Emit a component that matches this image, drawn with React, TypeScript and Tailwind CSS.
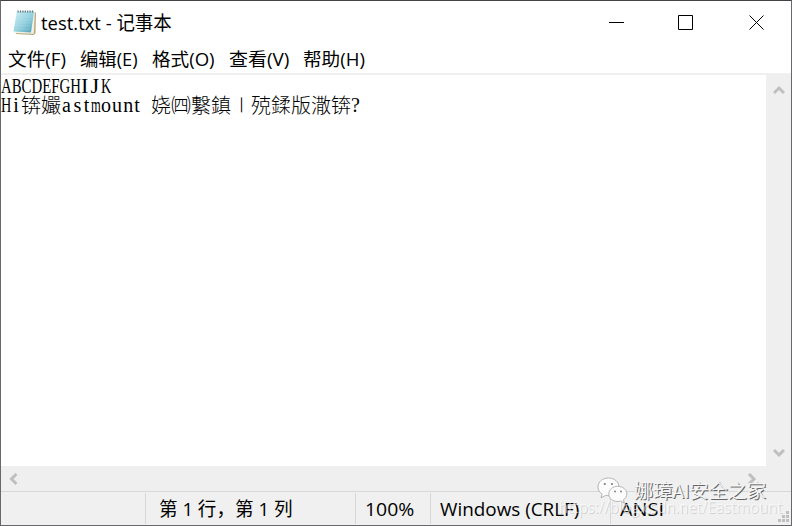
import { useLayoutEffect, useRef, useState } from "react";

const UI = "font-['Open_Sans','Noto_Sans_CJK_SC',sans-serif]";
const CJK = "font-['Noto_Sans_CJK_SC',sans-serif] font-light";
const SERIF = "font-['Liberation_Serif','Noto_Sans_CJK_SC',serif]";

/** One line of text stretched or squeezed to a given width. */
function Fit({ text, width, className = "" }: { text: string; width: number; className?: string }) {
  const ref = useRef<HTMLSpanElement>(null);
  const [scale, setScale] = useState(1);
  useLayoutEffect(() => {
    if (ref.current) setScale(width / ref.current.offsetWidth);
  }, [text, width]);
  return (
    <span className={`inline-block shrink-0 whitespace-pre ${className}`} style={{ width }}>
      <span ref={ref} className="inline-block origin-left" style={{ transform: `scaleX(${scale})` }}>
        {text}
      </span>
    </span>
  );
}

function NotepadIcon() {
  return (
    <svg width="24" height="26" viewBox="0 0 24 26" className="shrink-0">
      <defs>
        <linearGradient id="page" x1="0" y1="0" x2="1" y2="1">
          <stop offset="0" stopColor="#d3f1f6" />
          <stop offset=".5" stopColor="#98d3e1" />
          <stop offset="1" stopColor="#4b9fb6" />
        </linearGradient>
      </defs>
      <path d="M7 2 24 2.500 23.500 23.500 21.500 25 4 24Z" fill="#b8a982" />
      <path d="M6 2 22.800 2.500 21.800 23.800 3 23Z" fill="#f3f1e6" />
      <path d="M4.800 1.500h17.200L19 22.500 1.500 21.500Z" fill="url(#page)" />
      <path d="M5 7h15M4.500 10h15M4 13h15M3.500 16h15M3 19h15" stroke="#b9e2eb" strokeWidth=".7" opacity=".5" />
      <path d="M5.500 1.500h16.500" stroke="#56757c" strokeWidth="2.200" strokeDasharray="1.200 1.200" />
    </svg>
  );
}

function Chevron({ d, w, h }: { d: string; w: number; h: number }) {
  return (
    <svg width={w} height={h} viewBox={`0 0 ${w} ${h}`} fill="none" stroke="#bfbfbf" strokeWidth="3">
      <path d={d} />
    </svg>
  );
}

function WeChat() {
  return (
    <svg width="31" height="27" viewBox="0 0 31 27" fill="#fcfcfc" stroke="#a4a4a4" strokeWidth=".8">
      <path d="M11.500 1C5.500 1 1 4.800 1 10c0 3 1.600 5.400 4.200 7L4 20.800l4.600-2.400c1 .2 2 .3 3 .3C17.600 18.700 22 15 22 10S17.500 1 11.500 1Z" />
      <path d="M20.700 9.300c-5 0-8.900 3.300-8.900 7.600s3.900 7.600 8.900 7.600c1 0 2-.2 2.900-.4l3.800 2-1-3.300c2.100-1.400 3.400-3.400 3.400-5.900 0-4.300-4-7.600-9.100-7.600Z" />
      <g fill="#777" stroke="none">
        <circle cx="7.800" cy="7" r="1.100" />
        <circle cx="15" cy="7" r="1.100" />
        <circle cx="18" cy="14.500" r=".9" />
        <circle cx="24" cy="14.500" r=".9" />
      </g>
    </svg>
  );
}

const menus = [
  { text: "文件(F)", width: 58 },
  { text: "编辑(E)", width: 58 },
  { text: "格式(O)", width: 63 },
  { text: "查看(V)", width: 60 },
  { text: "帮助(H)", width: 62 },
];

export default function App() {
  return (
    <div className={`relative flex h-[526px] w-[792px] flex-col overflow-hidden border border-[#68686a] border-t-[#434347] bg-white text-black ${UI}`}>
      <header className="flex h-[43px] shrink-0 items-center pl-[11px]">
        <NotepadIcon />
        <Fit text="test.txt - 记事本" width={131} className="ml-[5px] text-[19px] leading-[26px]" />
        <svg width="156" height="16" viewBox="0 0 156 16" className="mr-[26px] ml-auto" fill="none" stroke="#000">
          <path d="M0 7.500h15M69.500.5h14v14h-14zM140.500.5l14 14m0-14-14 14" />
        </svg>
      </header>

      <nav className="flex h-[29px] shrink-0 items-center gap-[14px] pl-[7px] text-[18px] leading-[26px]">
        {menus.map((m) => (
          <Fit key={m.text} {...m} />
        ))}
      </nav>

      <main className="flex h-[393px] shrink-0 border-t-2 border-[#efefef]">
        <div className="w-[765px] pt-px text-[20px] leading-[20px]">
          <div className="flex h-[19px]">
            <Fit text="ABCDEFGH" width={80} className={SERIF} />
            <Fit text="IJ" width={20} className={`tracking-[2px] ${SERIF}`} />
            <Fit text="K" width={10} className={SERIF} />
          </div>
          <div className="flex h-5">
            <Fit text="H" width={10} className={SERIF} />
            <span className={`w-[10px] text-center ${SERIF}`}>i</span>
            <Fit text="锛孍" width={40} className={CJK} />
            <Fit text="ast" width={30} className={`pl-[1px] tracking-[2.600px] ${SERIF}`} />
            <Fit text="m" width={10} className={SERIF} />
            <Fit text="ount" width={40} className={`tracking-[1.100px] ${SERIF}`} />
            <Fit text="娆㈣繋鎮" width={80} className={`ml-[10px] ${CJK}`} />
            <span className={`inline-block h-5 w-5 rotate-90 ${CJK}`}>ㄧ</span>
            <Fit text="殑鍒版潵锛" width={100} className={CJK} />
            <span className={SERIF}>?</span>
          </div>
        </div>
        <div className="flex flex-1 flex-col items-center justify-between bg-[#efefef] pt-[10px] pb-[8px]">
          <Chevron w={12} h={10} d="M1 8 6 3l5 5" />
          <Chevron w={12} h={10} d="m1 2 5 5 5-5" />
        </div>
      </main>

      <div className="flex h-[25px] shrink-0 items-center justify-between bg-[#efefef] pr-[34px] pl-[7px]">
        <Chevron w={10} h={12} d="M8.500 1 3.500 6l5 5" />
        <Chevron w={10} h={12} d="m2 1 5 5-5 5" />
      </div>

      <footer className="flex h-[34px] shrink-0 border-t border-[#d7d7d7] bg-[#f0f0f0] pt-px text-[19px] leading-[32px]">
        <div className="h-[31px] w-[145px] border-r border-[#d7d7d7]" />
        <div className="h-[31px] w-[210px] border-r border-[#d7d7d7] pl-[13px]">
          <Fit text="第 1 行，第 1 列" width={133} />
        </div>
        <div className="h-[31px] w-[75px] border-r border-[#d7d7d7] pl-[9px]">
          <Fit text="100%" width={49} />
        </div>
        <div className="h-[31px] w-[180px] border-r border-[#d7d7d7] pl-[9px]">
          <Fit text="Windows (CRLF)" width={139} />
        </div>
        <div className="flex flex-1 items-end pl-[9px]">
          <Fit text="ANSI" width={44} />
          <svg width="12" height="12" viewBox="0 0 12 12" className="mr-[2px] mb-[2px] ml-auto" fill="#bfbfbf">
            <path d="M9 0h3v3H9zM9 4h3v3H9zM9 8h3v3H9zM5 4h3v3H5zM5 8h3v3H5zM1 8h3v3H1z" />
          </svg>
        </div>
      </footer>

      <div className="absolute top-[493px] left-[558px] flex text-[17px] leading-[26px] text-white/60 [text-shadow:1px_1px_0_#00000024]">
        <Fit text="https://blog.csdn.net/Eastmount" width={223} />
      </div>
      <div className="absolute top-[476px] left-[596px] flex">
        <WeChat />
        <Fit
          text="娜璋AI安全之家"
          width={132}
          className="ml-[6px] font-['Noto_Sans_CJK_SC',sans-serif] text-[19px] leading-[26px] text-[#f4f4f4] [text-shadow:1px_1px_0_#666]"
        />
      </div>
    </div>
  );
}
